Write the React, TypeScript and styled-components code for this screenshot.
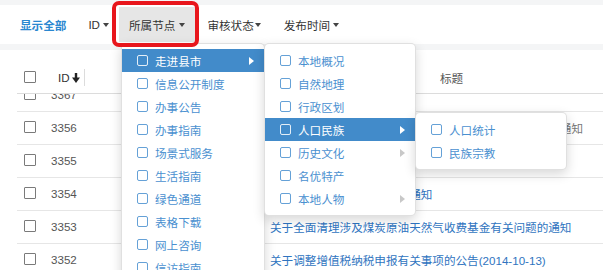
import React from "react";
import styled, { createGlobalStyle } from "styled-components";

const GlobalStyle = createGlobalStyle`
  html, body {
    margin: 0;
    padding: 0;
    background: #f4f5f6;
    overflow: hidden;
  }
  body {
    font-family: "Liberation Sans", "Noto Sans CJK SC", sans-serif;
    font-size: 11.6px;
    color: #333;
  }
  * {
    box-sizing: border-box;
  }
`;

const colors = {
  primary: "#2a87d0",
  menuText: "#4a90d0",
  menuActive: "#428bca",
  link: "#2f74c0",
  line: "#e6e6e6",
};

interface MenuItemData {
  label: string;
  active?: boolean;
  arrow?: boolean;
  children?: Array<MenuItemData>;
}

interface RowData {
  id: string;
  title: string;
  muted?: boolean;
}

const menuTree: Array<MenuItemData> = [
  {
    label: "走进县市",
    active: true,
    arrow: true,
    children: [
      { label: "本地概况" },
      { label: "自然地理" },
      { label: "行政区划" },
      {
        label: "人口民族",
        active: true,
        arrow: true,
        children: [{ label: "人口统计" }, { label: "民族宗教" }],
      },
      { label: "历史文化", arrow: true },
      { label: "名优特产" },
      { label: "本地人物", arrow: true },
    ],
  },
  { label: "信息公开制度" },
  { label: "办事公告" },
  { label: "办事指南" },
  { label: "场景式服务" },
  { label: "生活指南" },
  { label: "绿色通道" },
  { label: "表格下载" },
  { label: "网上咨询" },
  { label: "信访指南" },
  { label: "政务微博" },
];

const rows: Array<RowData> = [
  { id: "3367", title: "关于部门决算工作的通知" },
  { id: "3356", title: "关于进一步做好行政事业性收费项目清理工作有关问题的通知", muted: true },
  { id: "3355", title: "关于公布取消和免征部分行政事业性收费的通知" },
  { id: "3354", title: "关于开展税收宣传月活动的通知" },
  { id: "3353", title: "关于全面清理涉及煤炭原油天然气收费基金有关问题的通知" },
  { id: "3352", title: "关于调整增值税纳税申报有关事项的公告(2014-10-13)" },
  { id: "3351", title: "关于做好政府信息公开工作的通知" },
];

const Page = styled.div`
  width: 603px;
  height: 270px;
  overflow: hidden;
  display: flex;
  flex-direction: column;
  padding-top: 5px;
`;

const Toolbar = styled.div`
  height: 39px;
  background: #fff;
  display: flex;
  align-items: center;
  padding-left: 10px;
  position: relative;
  z-index: 5;
`;

const NavItem = styled.div<{ $primary?: boolean; $active?: boolean; $ml?: number }>`
  position: relative;
  height: 35px;
  padding: 0 10px;
  margin-left: ${(p) => p.$ml ?? 0}px;
  display: flex;
  align-items: center;
  gap: ${(p) => (p.$active ? 4 : 3)}px;
  color: ${(p) => (p.$primary ? colors.primary : "#333")};
  font-weight: ${(p) => (p.$primary ? 700 : 400)};
  background: ${(p) => (p.$active ? "#e6e6e6" : "transparent")};
  white-space: nowrap;
`;

const Caret = styled.span<{ $tight?: boolean }>`
  width: 0;
  height: 0;
  margin-left: ${(p) => (p.$tight ? -2 : 0)}px;
  border-top: 4px solid #444;
  border-left: 3.5px solid transparent;
  border-right: 3.5px solid transparent;
`;

const Highlight = styled.span`
  position: absolute;
  top: -6px;
  right: -4px;
  bottom: -5px;
  left: -7px;
  border: 4.5px solid #e8161c;
  border-radius: 7px;
  pointer-events: none;
  z-index: 30;
`;

const Menu = styled.ul<{ $root?: boolean }>`
  position: absolute;
  top: ${(p) => (p.$root ? "calc(100% + 1px)" : "-6px")};
  left: ${(p) => (p.$root ? "2px" : "100%")};
  width: ${(p) => (p.$root ? 144 : 152)}px;
  margin: 0;
  padding: 5px 0;
  list-style: none;
  background: #fff;
  border: 1px solid rgba(0, 0, 0, 0.12);
  border-radius: 5px;
  box-shadow: 0 4px 12px rgba(0, 0, 0, 0.16);
  font-weight: 400;
  z-index: 20;
`;

const MenuRow = styled.li`
  position: relative;
`;

const MenuLink = styled.div<{ $active?: boolean }>`
  height: 23px;
  padding-left: 15px;
  display: flex;
  align-items: center;
  gap: 7px;
  color: ${(p) => (p.$active ? "#fff" : colors.menuText)};
  background: ${(p) => (p.$active ? colors.menuActive : "transparent")};
`;

const MenuBox = styled.span`
  width: 11px;
  height: 11px;
  border: 1.5px solid currentColor;
  border-radius: 2px;
  opacity: 0.85;
  flex: none;
`;

const SubArrow = styled.span<{ $active?: boolean }>`
  position: absolute;
  right: 10px;
  top: 50%;
  margin-top: -4px;
  width: 0;
  height: 0;
  border-left: 5px solid ${(p) => (p.$active ? "#fff" : "#c8c8c8")};
  border-top: 4px solid transparent;
  border-bottom: 4px solid transparent;
`;

const Panel = styled.div`
  flex: 1;
  margin-top: 6px;
  background: #fff;
  padding: 12px 0 0 17px;
  display: flex;
  flex-direction: column;
  min-height: 0;
`;

const HeaderRow = styled.div`
  height: 32px;
  flex: none;
  display: flex;
  align-items: center;
  border-bottom: 1px solid #dcdcdc;
  color: #555;
`;

const Body = styled.div`
  flex: 1;
  overflow: hidden;
`;

const BodyInner = styled.div`
  margin-top: -15px;
`;

const Row = styled.div`
  height: 33px;
  display: flex;
  align-items: center;
  border-bottom: 1px solid ${colors.line};
`;

const CheckCell = styled.div`
  width: 28px;
  padding-left: 7px;
  display: flex;
  align-items: center;
  flex: none;
`;

const CheckBox = styled.span`
  width: 12px;
  height: 12px;
  margin-top: -2px;
  border: 1.5px solid #7a7a7a;
  border-radius: 1px;
  background: #fff;
`;

const IdHead = styled.div`
  width: 40px;
  height: 17px;
  padding-left: 13px;
  display: flex;
  align-items: center;
  gap: 2px;
  color: #333;
  border-right: 1px solid #dcdcdc;
  flex: none;
`;

const IdCell = styled.div`
  width: 40px;
  padding-left: 6px;
  margin-top: -1px;
  color: #555;
  flex: none;
`;

const NodeCell = styled.div`
  width: 180px;
  text-align: center;
  color: #555;
  flex: none;
`;

const TitleHead = styled.div`
  flex: 1;
  padding-left: 175px;
`;

const TitleCell = styled.div<{ $muted?: boolean }>`
  flex: 1;
  padding-left: 5px;
  white-space: nowrap;
  overflow: hidden;
  color: ${(p) => (p.$muted ? "#777" : colors.link)};
`;

const SortIcon = () => (
  <svg width="8" height="10" viewBox="0 0 8 10">
    <rect x="2.8" y="0" width="2.4" height="5.5" fill="#222" />
    <polygon points="0,4.5 8,4.5 4,10" fill="#222" />
  </svg>
);

const DropdownMenu = (props: { items: Array<MenuItemData>; root?: boolean }) => {
  return (
    <Menu $root={props.root}>
      {props.items.map((item) => (
        <MenuRow key={item.label}>
          <MenuLink $active={item.active}>
            <MenuBox />
            {item.label}
          </MenuLink>
          {item.arrow && <SubArrow $active={item.active} />}
          {item.children && <DropdownMenu items={item.children} />}
        </MenuRow>
      ))}
    </Menu>
  );
};

const App = () => {
  return (
    <Page>
      <GlobalStyle />
      <Toolbar>
        <NavItem $primary>显示全部</NavItem>
        <NavItem $ml={2}>
          ID <Caret />
        </NavItem>
        <NavItem $active>
          所属节点
          <Caret />
          <Highlight />
          <DropdownMenu items={menuTree} root />
        </NavItem>
        <NavItem $ml={2}>
          审核状态
          <Caret $tight />
        </NavItem>
        <NavItem $ml={3}>
          发布时间
          <Caret />
        </NavItem>
      </Toolbar>
      <Panel>
        <HeaderRow>
          <CheckCell>
            <CheckBox />
          </CheckCell>
          <IdHead>
            ID
            <SortIcon />
          </IdHead>
          <NodeCell>所属节点</NodeCell>
          <TitleHead>标题</TitleHead>
        </HeaderRow>
        <Body>
          <BodyInner>
            {rows.map((row) => (
              <Row key={row.id}>
                <CheckCell>
                  <CheckBox />
                </CheckCell>
                <IdCell>{row.id}</IdCell>
                <NodeCell>政策法规</NodeCell>
                <TitleCell $muted={row.muted}>{row.title}</TitleCell>
              </Row>
            ))}
          </BodyInner>
        </Body>
      </Panel>
    </Page>
  );
};

export default App;
